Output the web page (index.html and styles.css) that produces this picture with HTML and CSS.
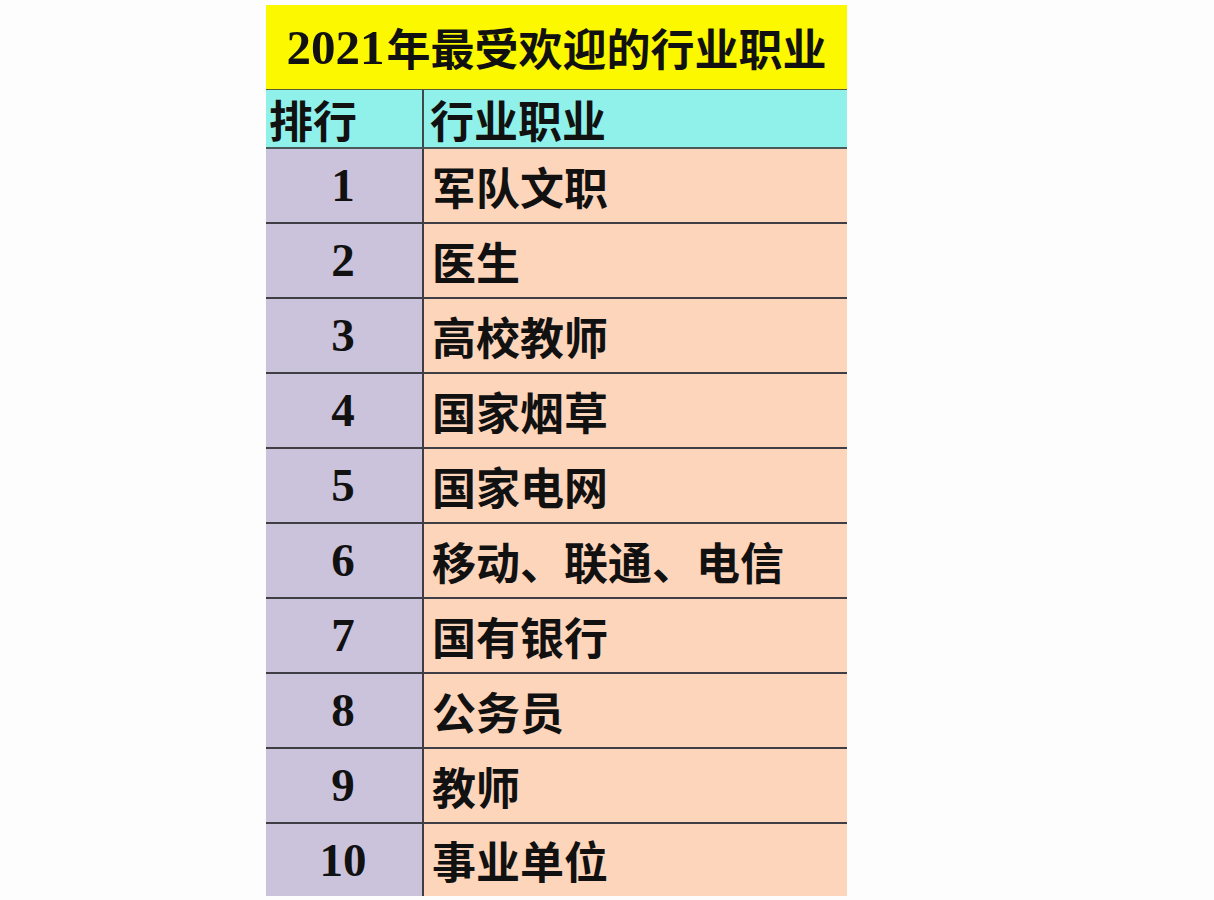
FILE: index.html
```html
<!DOCTYPE html>
<html lang="zh-CN">
<head>
<meta charset="utf-8">
<title>2021年最受欢迎的行业职业</title>
<link rel="stylesheet" href="styles.css">
</head>
<body>
<div class="page">
  <div class="table">
    <div class="title"><span class="num">2021</span>年最受欢迎的行业职业</div>
    <div class="grid">
      <div class="cell head rank-head">排行</div>
      <div class="cell head job-head">行业职业</div>

      <div class="cell rank">1</div><div class="cell job">军队文职</div>
      <div class="cell rank">2</div><div class="cell job">医生</div>
      <div class="cell rank">3</div><div class="cell job">高校教师</div>
      <div class="cell rank">4</div><div class="cell job">国家烟草</div>
      <div class="cell rank">5</div><div class="cell job">国家电网</div>
      <div class="cell rank">6</div><div class="cell job">移动、联通、电信</div>
      <div class="cell rank">7</div><div class="cell job">国有银行</div>
      <div class="cell rank">8</div><div class="cell job">公务员</div>
      <div class="cell rank">9</div><div class="cell job">教师</div>
      <div class="cell rank last">10</div><div class="cell job last">事业单位</div>
    </div>
  </div>
</div>
</body>
</html>
```

FILE: styles.css
```css
html, body {
  margin: 0;
  padding: 0;
  background: #fdfdfd;
}

.page {
  padding: 5px 0 0 266px;
  height: 895px;
  overflow: hidden;
}

.table {
  width: 581px;
  font-family: "Noto Sans CJK SC", "Noto Sans", sans-serif;
  font-weight: 700;
  color: #111;
}

.title {
  height: 84px;
  background: #fcf800;
  border-bottom: 1px solid #5a5a3a;
  display: flex;
  align-items: center;
  justify-content: center;
  font-size: 44px;
  line-height: 1;
}

.title .num {
  font-family: "Liberation Serif", serif;
  font-weight: 700;
  font-size: 49px;
  margin-right: 2px;
}

.grid {
  display: grid;
  grid-template-columns: 158px 1fr;
}

.cell {
  display: flex;
  align-items: center;
  height: 73px;
  border-bottom: 2px solid #3e3e44;
  font-size: 44px;
  line-height: 1;
}

.cell.last {
  height: 72px;
  border-bottom: none;
}

.head {
  height: 57px;
  background: #8ff1ea;
  border-bottom: 2px solid #4a5a5a;
}

.rank-head {
  padding-left: 3px;
  border-right: 2px solid #3e4a4a;
}

.job-head {
  padding-left: 6px;
}

.rank {
  background: #cbc2dc;
  border-right: 2px solid #3e3e44;
  justify-content: center;
  font-family: "Liberation Serif", serif;
  font-size: 47px;
  padding-right: 2px;
}

.job {
  background: #fdd5bb;
  padding-left: 8px;
}
```
